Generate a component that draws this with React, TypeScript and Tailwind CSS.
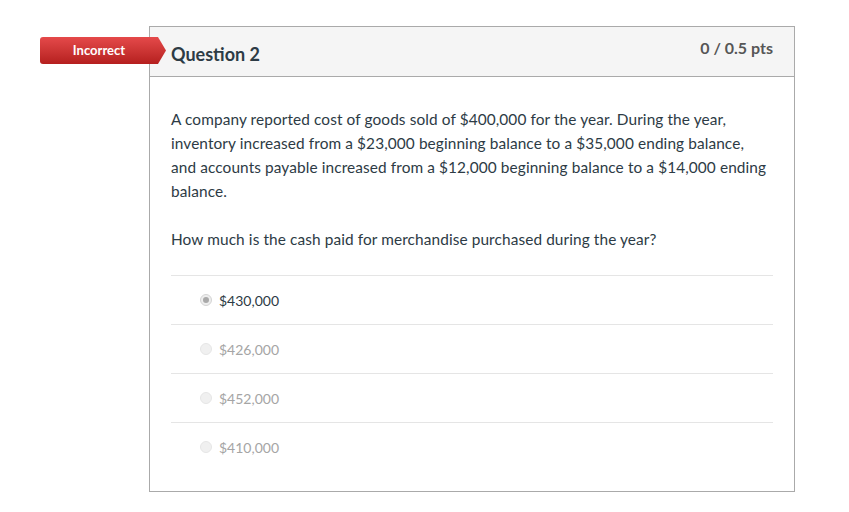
import React from 'react';

const options = [
  { label: '$430,000', selected: true },
  { label: '$426,000', selected: false },
  { label: '$452,000', selected: false },
  { label: '$410,000', selected: false },
];

function Radio({ selected }: { selected: boolean }) {
  return selected ? (
    <span className="flex h-[12px] w-[12px] items-center justify-center rounded-full border border-[#d4d4d4] bg-[#eeeeee]">
      <span className="h-[6px] w-[6px] rounded-full bg-[#a9a9a9]" />
    </span>
  ) : (
    <span className="h-[12px] w-[12px] rounded-full border border-[#e6e6e6] bg-[#f0f0f0]" />
  );
}

export default function App() {
  return (
    <div className="min-h-[512px] w-[849px] bg-white pt-[26px] pl-[149px] font-['Lato','Liberation_Sans',sans-serif] text-[#2d3b45]">
      <div className="relative w-[646px] border border-[#aaaaaa]">
        {/* Incorrect badge */}
        <div className="absolute left-[-110px] top-[10px] flex h-[27px] w-[126px] items-center rounded-l-[3px] bg-gradient-to-b from-[#e5494a] to-[#b51f1e] [clip-path:polygon(0_0,118px_0,126px_50%,118px_100%,0_100%)]">
          <span className="w-[118px] text-center text-[13px] font-bold text-white">Incorrect</span>
        </div>

        {/* Header */}
        <div className="flex h-[50px] items-start justify-between border-b border-[#aaaaaa] bg-[#f5f5f5] pl-[21px] pr-[21px]">
          <h2 className="pt-[15px] text-[18px] font-bold leading-[24px] text-[#2d3b45]">Question 2</h2>
          <span className="pt-[10px] text-[16px] font-bold leading-[22px] text-[#565656]">0 / 0.5 pts</span>
        </div>

        {/* Body */}
        <div className="px-[21px] pt-[30px] pb-[20px]">
          <p className="text-[15.4px] leading-[24px] tracking-[0.1px]">
            A company reported cost of goods sold of $400,000 for the year. During the year,
            <br />
            inventory increased from a $23,000 beginning balance to a $35,000 ending balance,
            <br />
            and accounts payable increased from a $12,000 beginning balance to a $14,000 ending
            <br />
            balance.
          </p>
          <p className="mt-[24px] text-[15.4px] leading-[24px] tracking-[0.1px]">
            How much is the cash paid for merchandise purchased during the year?
          </p>

          <div className="mt-[24px]">
            {options.map((opt) => (
              <div
                key={opt.label}
                className="flex h-[49px] items-center gap-[7px] border-t border-[#e5e5e5] pl-[29px]"
              >
                <Radio selected={opt.selected} />
                <span className={opt.selected ? 'text-[14px] text-[#2d3b45]' : 'text-[14px] text-[#a5a5a5]'}>
                  {opt.label}
                </span>
              </div>
            ))}
          </div>
        </div>
      </div>
    </div>
  );
}
